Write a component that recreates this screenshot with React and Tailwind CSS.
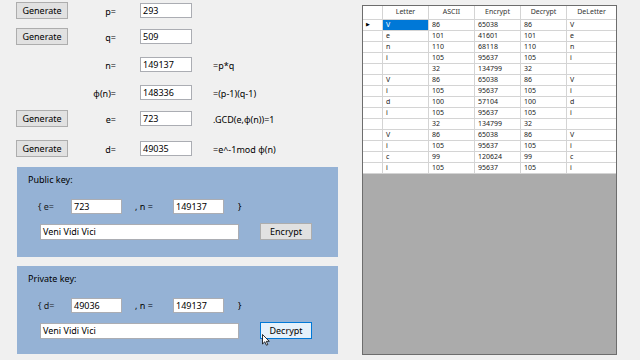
import React from 'react'

const rows = [
  ['V', '86', '65038', '86', 'V'],
  ['e', '101', '41601', '101', 'e'],
  ['n', '110', '68118', '110', 'n'],
  ['i', '105', '95637', '105', 'i'],
  ['', '32', '134799', '32', ''],
  ['V', '86', '65038', '86', 'V'],
  ['i', '105', '95637', '105', 'i'],
  ['d', '100', '57104', '100', 'd'],
  ['i', '105', '95637', '105', 'i'],
  ['', '32', '134799', '32', ''],
  ['V', '86', '65038', '86', 'V'],
  ['i', '105', '95637', '105', 'i'],
  ['c', '99', '120624', '99', 'c'],
  ['i', '105', '95637', '105', 'i'],
]

const headers = ['Letter', 'ASCII', 'Encrypt', 'Decrypt', 'DeLetter']

function Btn({ children, hover, className = '' }) {
  return (
    <div
      className={
        'flex items-center justify-center border text-[9px] text-black ' +
        (hover ? 'bg-[#e5f1fb] border-[#0078d7] ' : 'bg-[#e1e1e1] border-[#adadad] ') +
        className
      }
    >
      {children}
    </div>
  )
}

function Field({ value, className = '' }) {
  return (
    <div className={'flex items-center bg-white border border-[#abadb3] px-[2px] text-[9px] text-black ' + className}>
      {value}
    </div>
  )
}

function ParamRow({ gen, label, value, note, className = '' }) {
  return (
    <div className={'flex items-center h-[17px] ' + className}>
      <div className="w-[52px] ml-[16px]">
        {gen && <Btn className="h-[17px]">Generate</Btn>}
      </div>
      <div className="w-[50px] text-[9px] text-right pr-[2px] pt-[3px]">{label}</div>
      <div className="w-[22px]" />
      <Field value={value} className="w-[52px] h-[15px]" />
      <div className="ml-[21px] text-[9px] pt-[2px]">{note}</div>
    </div>
  )
}

function KeyPanel({ title, k, kv, msg, action, hover, className = '' }) {
  return (
    <div className={'ml-[17px] w-[321px] bg-[#95b2d5] flex flex-col ' + className}>
      <div className="ml-[11px] mt-[6px] text-[9px] h-[12px]">{title}</div>
      <div className="flex items-center h-[15px] mt-[14px]">
        <div className="ml-[21px] w-[33px] text-[9px] text-[#1a1a1a]">{'{ ' + k + '='}</div>
        <Field value={kv} className="w-[51px] h-[15px]" />
        <div className="ml-[13px] w-[38px] text-[9px]">, n =</div>
        <Field value="149137" className="w-[51px] h-[15px]" />
        <div className="ml-[14px] text-[9px]">{'}'}</div>
      </div>
      <div className="flex items-center mt-[9px]">
        <Field value={msg} className="ml-[23px] w-[199px] h-[16px]" />
        <Btn hover={hover} className="ml-[21px] w-[52px] h-[17px]">{action}</Btn>
      </div>
    </div>
  )
}

export default function App() {
  return (
    <div
      className="relative w-[640px] h-[360px] bg-[#f0f0f0] flex overflow-hidden text-black"
      style={{ fontFamily: '"Noto Sans", "Open Sans", sans-serif' }}
    >
      <div className="w-[362px] flex flex-col">
        <ParamRow gen label="p=" value="293" className="mt-[2px]" />
        <ParamRow gen label="q=" value="509" className="mt-[9px]" />
        <ParamRow label="n=" value="149137" note="=p*q" className="mt-[11px]" />
        <ParamRow label="φ(n)=" value="148336" note="=(p-1)(q-1)" className="mt-[11px]" />
        <ParamRow gen label="e=" value="723" note=".GCD(e,φ(n))=1" className="mt-[9px]" />
        <ParamRow gen label="d=" value="49035" note="=e^-1mod φ(n)" className="mt-[13px]" />

        <KeyPanel
          title="Public key:"
          k="e"
          kv="723"
          msg="Veni Vidi Vici"
          action="Encrypt"
          className="mt-[10px] h-[90px]"
        />
        <KeyPanel
          title="Private key:"
          k="d"
          kv="49036"
          msg="Veni Vidi Vici"
          action="Decrypt"
          hover
          className="mt-[9px] h-[88px]"
        />
      </div>

      <div className="mt-[5px] w-[255px] h-[350px] border border-[#6d6d6d] bg-[#ababab] flex flex-col text-[7px] text-[#222]">
        <div className="flex h-[14px] bg-white border-b border-[#d4d4d4]">
          <div className="w-[20px] border-r border-[#d4d4d4]" />
          {headers.map((h, j) => (
            <div
              key={h}
              className={
                'flex items-center justify-center text-[#333] ' +
                (j === 4 ? 'flex-1' : 'w-[46px] border-r border-[#d4d4d4]')
              }
            >
              {h}
            </div>
          ))}
        </div>
        {rows.map((r, i) => (
          <div key={i} className="flex h-[11px] bg-white border-b border-[#d4d4d4]">
            <div className="w-[20px] border-r border-[#d4d4d4] flex items-center pl-[3px] text-[5px] text-black">
              {i === 0 ? '▶' : ''}
            </div>
            {r.map((c, j) => (
              <div
                key={j}
                className={
                  'flex items-center pl-[3px] ' +
                  (j === 4 ? 'flex-1 ' : 'w-[46px] border-r border-[#d4d4d4] ') +
                  (i === 0 && j === 0 ? 'bg-[#0078d7] text-white' : '')
                }
              >
                {c}
              </div>
            ))}
          </div>
        ))}
      </div>

      <svg className="absolute left-[262px] top-[334px]" width="8" height="12" viewBox="0 0 8 12">
        <path d="M0.5 0.5 L0.5 10 L2.8 7.8 L4.4 11.2 L5.8 10.6 L4.3 7.3 L7.3 7.3 Z" fill="white" stroke="black" strokeWidth="0.8" />
      </svg>
    </div>
  )
}
